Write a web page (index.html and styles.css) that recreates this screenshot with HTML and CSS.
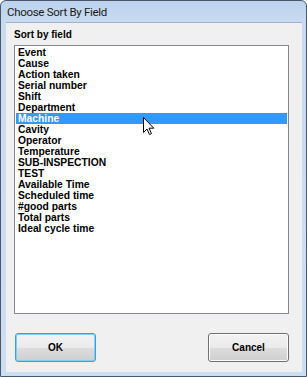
FILE: index.html
```html
<!DOCTYPE html>
<html>
<head>
<meta charset="utf-8">
<link rel="stylesheet" href="styles.css">
</head>
<body>
<div class="window">
  <div class="titlebar"><span class="title">Choose Sort By Field</span></div>
  <div class="content">
    <div class="label">Sort by field</div>
    <div class="listbox">
      <div class="item">Event</div>
      <div class="item">Cause</div>
      <div class="item">Action taken</div>
      <div class="item">Serial number</div>
      <div class="item">Shift</div>
      <div class="item">Department</div>
      <div class="item selected">Machine</div>
      <div class="item">Cavity</div>
      <div class="item">Operator</div>
      <div class="item">Temperature</div>
      <div class="item">SUB-INSPECTION</div>
      <div class="item">TEST</div>
      <div class="item">Available Time</div>
      <div class="item">Scheduled time</div>
      <div class="item">#good parts</div>
      <div class="item">Total parts</div>
      <div class="item">Ideal cycle time</div>
    </div>
    <div class="buttons">
      <button class="btn default">OK</button>
      <button class="btn">Cancel</button>
    </div>
  </div>
  <svg class="cursor" width="12" height="19" viewBox="0 0 12 19">
    <path d="M0.5 0.5 L0.5 15.5 L4 12 L6.5 17.5 L8.5 16.6 L6 11.2 L10.8 11.2 Z" fill="#fff" stroke="#000" stroke-width="1" stroke-linejoin="miter"/>
  </svg>
</div>
</body>
</html>
```
FILE: styles.css
```css
html, body {
  margin: 0;
  padding: 0;
  background: #fff;
}
.window {
  position: relative;
  width: 307px;
  height: 377px;
  box-sizing: border-box;
  border: 1px solid #4a5868;
  border-radius: 6px 6px 0 0;
  background: linear-gradient(#bcd2ee, #c9dbf1 22px, #cddef2);
  display: flex;
  flex-direction: column;
  padding: 0 4px 4px 5px;
  overflow: hidden;
}
.titlebar {
  height: 21px;
  flex: none;
  display: flex;
  align-items: center;
  padding-left: 1px;
}
.title {
  font-family: Roboto, "Liberation Sans", sans-serif;
  font-size: 11.5px;
  letter-spacing: -0.3px;
  color: #1b1b1b;
}
.content {
  flex: 1;
  background: #f0f0f0;
  border-top: 1px solid #9eb3cf;
  padding: 6px 13px 0 8px;
  font-family: "Liberation Sans", Arial, sans-serif;
}
.label {
  font-weight: bold;
  font-size: 10px;
  line-height: 12px;
  color: #000;
}
.listbox {
  margin-top: 4px;
  height: 269px;
  box-sizing: border-box;
  border: 1px solid #828790;
  background: #fff;
  padding: 1px 1px 0 1px;
}
.item {
  font-weight: bold;
  font-size: 10.3px;
  line-height: 11px;
  height: 11px;
  padding-left: 2px;
  color: #000;
  white-space: nowrap;
}
.item.selected {
  background: #3399ff;
  color: #fff;
}
.buttons {
  display: flex;
  justify-content: space-between;
  margin-top: 19px;
  padding-left: 1px;
}
.btn {
  width: 81px;
  height: 29px;
  border: 1px solid #707070;
  border-radius: 3px;
  background: linear-gradient(#f2f2f2 0%, #ebebeb 50%, #dddddd 51%, #cfcfcf 100%);
  box-shadow: inset 0 0 0 1px #fcfcfc;
  font-family: "Liberation Sans", Arial, sans-serif;
  font-weight: bold;
  font-size: 10px;
  color: #000;
  padding: 0;
}
.btn.default {
  border-color: #3c9fd8;
  box-shadow: inset 0 0 0 1px #7fd0f5;
}
.cursor {
  position: absolute;
  left: 142px;
  top: 116px;
}
```
